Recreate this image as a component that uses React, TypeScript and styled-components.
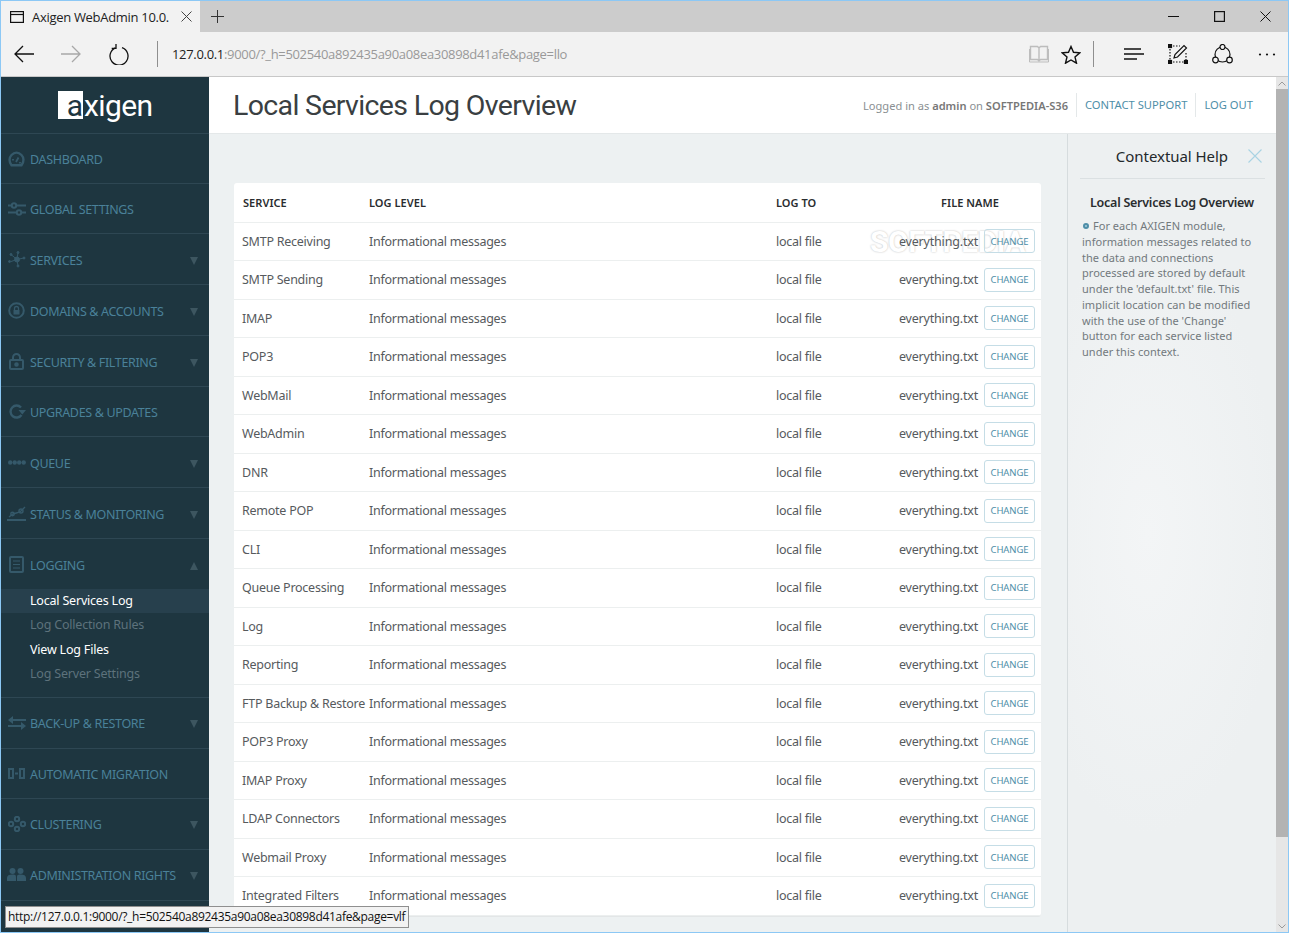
import React from 'react';
import styled, { createGlobalStyle } from 'styled-components';

const GlobalStyle = createGlobalStyle`
  html, body {
    margin: 0;
    padding: 0;
    overflow: hidden;
    background: #fff;
  }
`;

const sans = `"Noto Sans", "Open Sans", sans-serif`;

const Window = styled.div`
  position: relative;
  width: 1289px;
  height: 933px;
  box-sizing: border-box;
  border: 1px solid #8cc8f5;
  display: flex;
  flex-direction: column;
  overflow: hidden;
  font-family: ${sans};
`;

const TabBar = styled.div`
  height: 31px;
  flex: none;
  background: #cccccc;
  display: flex;
  align-items: stretch;
`;

const Tab = styled.div`
  width: 199px;
  background: #f2f2f2;
  display: flex;
  align-items: center;
  padding: 0 8px 0 9px;
  box-sizing: border-box;
  gap: 8px;
  flex: none;
`;

const TabTitle = styled.span`
  font: 13px "Open Sans", sans-serif;
  letter-spacing: -0.3px;
  color: #222;
  white-space: nowrap;
  flex: 1;
`;

const NewTab = styled.div`
  width: 34px;
  display: flex;
  align-items: center;
  justify-content: center;
  flex: none;
`;

const TabSpacer = styled.div`
  flex: 1;
`;

const WinButton = styled.div`
  width: 46px;
  display: flex;
  align-items: center;
  justify-content: center;
`;

const Toolbar = styled.div`
  height: 45px;
  flex: none;
  box-sizing: border-box;
  background: #f2f2f2;
  border-bottom: 1px solid #c8c8c8;
  display: flex;
  align-items: center;
`;

const ToolButton = styled.div<{ $w: number }>`
  width: ${(p) => p.$w}px;
  height: 44px;
  flex: none;
  display: flex;
  align-items: center;
  justify-content: center;
`;

const ToolDivider = styled.div<{ $m: string }>`
  width: 1px;
  height: 26px;
  background: #8f8f8f;
  flex: none;
  margin: ${(p) => p.$m};
`;

const Url = styled.div`
  flex: 1;
  font: 13px "Open Sans", sans-serif;
  letter-spacing: -0.32px;
  color: #999;
  white-space: nowrap;
  b {
    font-weight: 400;
    color: #222;
  }
`;

const Body = styled.div`
  flex: 1;
  display: flex;
  min-height: 0;
`;

const Sidebar = styled.nav`
  width: 208px;
  flex: none;
  background: #1e3640;
  overflow: hidden;
`;

const Logo = styled.div`
  height: 56px;
  border-bottom: 1px solid #2e4753;
  display: flex;
  align-items: center;
  padding-left: 57px;
`;

const LogoBox = styled.span`
  width: 25px;
  height: 28px;
  background: #fff;
  color: #1e3640;
  font: 400 30px/29.5px Roboto, sans-serif;
  text-align: right;
  display: block;
`;

const LogoText = styled.span`
  height: 28px;
  font: 400 30px/29.5px Roboto, sans-serif;
  color: #fff;
  letter-spacing: -0.6px;
  margin-left: 1px;
`;

const NavItem = styled.div<{ $h: number; $open?: boolean }>`
  height: ${(p) => p.$h}px;
  box-sizing: border-box;
  border-bottom: ${(p) => (p.$open ? 'none' : '1px solid #2e4753')};
  display: flex;
  align-items: center;
`;

const NavIcon = styled.div`
  width: 29px;
  flex: none;
  display: flex;
  justify-content: center;
  padding-left: 2px;
  box-sizing: border-box;
  color: #35596a;
`;

const NavLabel = styled.span`
  font: 12.5px ${sans};
  letter-spacing: -0.34px;
  color: #4a8199;
  white-space: nowrap;
  flex: 1;
  padding-top: 2px;
`;

const Arrow = styled.span<{ $up?: boolean }>`
  width: 0;
  height: 0;
  margin: 3px 11px 0 0;
  border-left: 4.5px solid transparent;
  border-right: 4.5px solid transparent;
  ${(p) => (p.$up ? 'border-bottom: 8px solid #3d5660;' : 'border-top: 8px solid #3d5660;')}
`;

const SubList = styled.div`
  border-bottom: 1px solid #2e4753;
  padding-bottom: 10.4px;
`;

const SubItem = styled.div<{ $tone: 'active' | 'white' | 'dim' }>`
  height: 24.4px;
  padding-left: 29px;
  font: 12.5px/24px ${sans};
  letter-spacing: -0.2px;
  white-space: nowrap;
  color: ${(p) => (p.$tone === 'dim' ? '#5d727c' : '#fff')};
  background: ${(p) => (p.$tone === 'active' ? '#27404d' : 'transparent')};
`;

const Main = styled.main`
  flex: 1;
  min-width: 0;
  display: flex;
  flex-direction: column;
  background: #edf1f2;
`;

const Header = styled.header`
  height: 57px;
  flex: none;
  box-sizing: border-box;
  background: #fff;
  border-bottom: 1px solid #e4e8e9;
  display: flex;
  align-items: center;
  padding: 0 23px 0 24px;
`;

const Title = styled.h1`
  flex: 1;
  margin: 0;
  font: 400 28.5px Roboto, sans-serif;
  letter-spacing: -0.65px;
  color: #3a3f42;
  white-space: nowrap;
`;

const UserInfo = styled.span`
  font: 11.1px ${sans};
  color: #8a8f92;
  white-space: nowrap;
  b {
    font-weight: 600;
    color: #777;
  }
`;

const HeaderLink = styled.a`
  font: 11.2px ${sans};
  letter-spacing: 0;
  color: #4e8ea8;
  border-left: 1px solid #e4e8e9;
  margin-left: 8px;
  padding-left: 8px;
  height: 24px;
  line-height: 24px;
  white-space: nowrap;
`;

const Columns = styled.div`
  flex: 1;
  min-height: 0;
  display: flex;
`;

const Content = styled.section`
  width: 858px;
  flex: none;
  box-sizing: border-box;
  padding: 49px 0 0 25px;
  overflow: hidden;
`;

const Card = styled.div`
  width: 807px;
  background: #fff;
  border-radius: 3px;
  position: relative;
  box-shadow: 0 1px 0 #e3e6e7;
`;

const Row = styled.div<{ $head?: boolean }>`
  display: grid;
  grid-template-columns: 127px 407px 115px 1fr;
  align-items: center;
  height: ${(p) => (p.$head ? '39.7px' : '38.5px')};
  box-sizing: border-box;
  padding-left: 8px;
  border-bottom: 1px solid #ecefef;
  &:last-of-type {
    border-bottom: none;
  }
`;

const HeadCell = styled.div<{ $inset?: boolean }>`
  font: 600 11px ${sans};
  letter-spacing: 0.05px;
  color: #2a2d2f;
  padding-left: ${(p) => (p.$inset ? '1px' : '0')};
`;

const HeadFile = styled(HeadCell)`
  text-align: right;
  padding-right: 42px;
`;

const Cell = styled.div`
  font: 12.5px ${sans};
  letter-spacing: -0.25px;
  color: #565a5d;
  white-space: nowrap;
`;

const FileCell = styled(Cell)`
  display: flex;
  justify-content: flex-end;
  align-items: center;
  gap: 6px;
  padding-right: 6px;
  position: relative;
  z-index: 1;
  letter-spacing: -0.18px;
`;

const ChangeButton = styled.button`
  width: 51px;
  height: 24px;
  flex: none;
  box-sizing: border-box;
  background: transparent;
  border: 1px solid #c5dde6;
  border-radius: 3px;
  padding: 0;
  font: 9.5px ${sans};
  letter-spacing: -0.1px;
  color: #4e8ea8;
`;

const Watermark = styled.div`
  position: absolute;
  left: 636px;
  top: 41px;
  font: 700 30px Roboto, sans-serif;
  letter-spacing: -0.5px;
  color: #fff;
  text-shadow: 0 0 2px rgba(0, 0, 0, 0.28);
  pointer-events: none;
  white-space: nowrap;
`;

const Help = styled.aside`
  flex: 1;
  min-width: 0;
  box-sizing: border-box;
  border-left: 1px solid #d6dcde;
  padding: 0 11px 0 12px;
  background: radial-gradient(ellipse 130px 300px at 80px 400px, #f3f5f6, #edf0f1);
`;

const HelpHead = styled.div`
  height: 44px;
  border-bottom: 1px solid #dbe0e2;
  display: flex;
  align-items: center;
  justify-content: flex-end;
  gap: 20px;
  padding-right: 3px;
`;

const HelpTitle = styled.span`
  font: 15px ${sans};
  letter-spacing: -0.05px;
  color: #23282b;
`;

const HelpHeading = styled.h3`
  margin: 14px 0 0;
  padding-left: 10px;
  font: 600 12.5px/19px ${sans};
  letter-spacing: -0.25px;
  color: #2a2d2f;
  white-space: nowrap;
`;

const HelpBody = styled.p`
  margin: 6px 0 0;
  padding-left: 2px;
  font: 11px/15.75px ${sans};
  letter-spacing: 0.02px;
  color: #72797d;
  white-space: nowrap;
`;

const Bullet = styled.span`
  display: inline-block;
  width: 2px;
  height: 2px;
  border: 2px solid #4e8ea8;
  background: #a9cdda;
  border-radius: 50%;
  margin: 0 4px 1px 1px;
`;

const Scrollbar = styled.div`
  width: 12px;
  flex: none;
  background: #e6e6e6;
  display: flex;
  flex-direction: column;
  align-items: center;
`;

const ScrollCap = styled.div`
  height: 12px;
  flex: none;
  display: flex;
  align-items: center;
  justify-content: center;
`;

const ScrollThumb = styled.div`
  width: 100%;
  height: 748px;
  background: #b3b3b3;
  flex: none;
`;

const ScrollRest = styled.div`
  flex: 1;
`;

const StatusTip = styled.div`
  position: absolute;
  left: 4px;
  bottom: 4px;
  height: 22px;
  box-sizing: border-box;
  border: 1px solid #8f8f8f;
  background: #f2f2f2;
  padding: 0 3px 0 2px;
  font: 12px/20px "Open Sans", sans-serif;
  letter-spacing: -0.3px;
  color: #111;
  white-space: nowrap;
`;

const Icon = ({ w, h, sw = 1.2, stroke = '#111', children }: { w: number; h: number; sw?: number; stroke?: string; children: React.ReactNode }) => (
  <svg width={w} height={h} viewBox={`0 0 ${w} ${h}`} fill="none" stroke={stroke} strokeWidth={sw} style={{ flex: 'none' }}>
    {children}
  </svg>
);

const navIcons: Record<string, React.ReactNode> = {
  dashboard: (
    <svg width="17" height="16" viewBox="0 0 17 16" fill="none" stroke="currentColor" strokeWidth="2.4">
      <path d="M3.500 14.300C0.800 11 1 6.500 3.500 4C6.500 1 10.500 1 13.500 4C16 6.500 16.200 11 13.500 14.300Z" />
      <path d="M8 11L10.500 6.500M5 8v1.500M12 11v1.500" strokeWidth="1.800" />
    </svg>
  ),
  settings: (
    <svg width="18" height="14" viewBox="0 0 18 14" fill="none" stroke="currentColor" strokeWidth="2">
      <path d="M0 3.500h18M0 10.500h18" />
      <circle cx="6" cy="3.500" r="2.200" fill="#1e3640" />
      <circle cx="11" cy="10.500" r="2.200" fill="#1e3640" />
    </svg>
  ),
  services: (
    <svg width="18" height="17" viewBox="0 0 18 17" fill="currentColor" stroke="currentColor" strokeWidth="1">
      <path d="M9 8.500L3 3.500M9 8.500L10 1.500M9 8.500L16 7M9 8.500L3 10.500M9 8.500L10 15" />
      <circle cx="9" cy="8.500" r="2.500" />
      <circle cx="3" cy="3.500" r="1" />
      <circle cx="10" cy="1.500" r="1" />
      <circle cx="16" cy="7" r="1" />
      <circle cx="1.500" cy="10.500" r="1" />
      <circle cx="10" cy="15" r="1" />
    </svg>
  ),
  domains: (
    <svg width="17" height="17" viewBox="0 0 17 17" fill="none" stroke="currentColor" strokeWidth="2">
      <circle cx="8.500" cy="8.500" r="7.300" />
      <rect x="5.500" y="8" width="6" height="4.500" fill="currentColor" stroke="none" />
      <path d="M6.500 8V6.500a2 2 0 0 1 4 0V8" strokeWidth="1.300" />
    </svg>
  ),
  security: (
    <svg width="15" height="17" viewBox="0 0 15 17" fill="none" stroke="currentColor" strokeWidth="2">
      <rect x="1" y="7" width="13" height="9" rx="1" />
      <path d="M4 7V4.500a3.500 3.500 0 0 1 7 0V7" />
      <circle cx="7.500" cy="11.500" r="1.300" fill="currentColor" />
    </svg>
  ),
  upgrades: (
    <svg width="18" height="15" viewBox="0 0 18 15" fill="none" stroke="currentColor" strokeWidth="2.400">
      <path d="M13 3.500A6 6 0 1 0 13.500 11" />
      <path d="M10.500 6h7.500l-3.700 4.500z" fill="currentColor" stroke="none" />
    </svg>
  ),
  queue: (
    <svg width="18" height="5" viewBox="0 0 18 5" fill="currentColor">
      <circle cx="2.200" cy="2.500" r="2.200" />
      <circle cx="6.700" cy="2.500" r="2.200" />
      <circle cx="11.200" cy="2.500" r="2.200" />
      <circle cx="15.700" cy="2.500" r="2.200" />
    </svg>
  ),
  status: (
    <svg width="19" height="16" viewBox="0 0 19 16" fill="none" stroke="currentColor" strokeWidth="1.400">
      <path d="M0 15h19" strokeWidth="2" />
      <path d="M2 12l4-3 7-2 5-5" />
      <circle cx="5.500" cy="9" r="1.700" />
      <circle cx="14" cy="6" r="2" />
    </svg>
  ),
  logging: (
    <svg width="15" height="17" viewBox="0 0 15 17" fill="none" stroke="currentColor" strokeWidth="2">
      <rect x="1" y="1" width="13" height="15" rx="1" />
      <path d="M4 5h7M4 8.500h7M4 12h7" strokeWidth="1" />
    </svg>
  ),
  backup: (
    <svg width="18" height="14" viewBox="0 0 18 14" fill="currentColor">
      <path d="M5 0v3h13v2H5v3L0 4zM13 6v3H0v2h13v3l5-4z" />
    </svg>
  ),
  migration: (
    <svg width="17" height="11" viewBox="0 0 17 11" fill="none" stroke="currentColor" strokeWidth="2">
      <rect x="1" y="1" width="4" height="9" />
      <rect x="12" y="1" width="4" height="9" />
      <path d="M7 5.500h3" />
    </svg>
  ),
  clustering: (
    <svg width="18" height="16" viewBox="0 0 18 16" fill="none" stroke="currentColor" strokeWidth="2">
      <circle cx="9" cy="3" r="2.200" />
      <circle cx="3" cy="8" r="2.200" />
      <circle cx="15" cy="8" r="2.200" />
      <circle cx="9" cy="13" r="2.200" />
    </svg>
  ),
  admin: (
    <svg width="19" height="13" viewBox="0 0 19 13" fill="currentColor">
      <circle cx="5.500" cy="3" r="3" />
      <circle cx="13.500" cy="3" r="3" />
      <path d="M0 13v-3c0-2.500 2-3.500 5.500-3.500S9 7.500 9 10v3zM10 13v-3c0-2.500 0-3.500 3.500-3.500S19 7.500 19 10v3z" />
    </svg>
  ),
};

type Nav = { key: string; label: string; h: number; arrow?: boolean };

const navBefore: Nav[] = [
  { key: 'dashboard', label: 'DASHBOARD', h: 50 },
  { key: 'settings', label: 'GLOBAL SETTINGS', h: 50 },
  { key: 'services', label: 'SERVICES', h: 51, arrow: true },
  { key: 'domains', label: 'DOMAINS & ACCOUNTS', h: 51, arrow: true },
  { key: 'security', label: 'SECURITY & FILTERING', h: 51, arrow: true },
  { key: 'upgrades', label: 'UPGRADES & UPDATES', h: 50 },
  { key: 'queue', label: 'QUEUE', h: 51, arrow: true },
  { key: 'status', label: 'STATUS & MONITORING', h: 51, arrow: true },
];

const navAfter: Nav[] = [
  { key: 'backup', label: 'BACK-UP & RESTORE', h: 51, arrow: true },
  { key: 'migration', label: 'AUTOMATIC MIGRATION', h: 50 },
  { key: 'clustering', label: 'CLUSTERING', h: 51, arrow: true },
  { key: 'admin', label: 'ADMINISTRATION RIGHTS', h: 51, arrow: true },
];

const services = [
  'SMTP Receiving',
  'SMTP Sending',
  'IMAP',
  'POP3',
  'WebMail',
  'WebAdmin',
  'DNR',
  'Remote POP',
  'CLI',
  'Queue Processing',
  'Log',
  'Reporting',
  'FTP Backup & Restore',
  'POP3 Proxy',
  'IMAP Proxy',
  'LDAP Connectors',
  'Webmail Proxy',
  'Integrated Filters',
];

const NavRow = ({ item }: { item: Nav }) => (
  <NavItem $h={item.h}>
    <NavIcon>{navIcons[item.key]}</NavIcon>
    <NavLabel>{item.label}</NavLabel>
    {item.arrow && <Arrow />}
  </NavItem>
);

export default function App() {
  return (
    <Window>
      <GlobalStyle />
      <TabBar>
        <Tab>
          <Icon w={14} h={12}>
            <rect x="0.600" y="0.600" width="12.800" height="10.800" />
            <path d="M0.600 3.500h12.800" />
          </Icon>
          <TabTitle>Axigen WebAdmin 10.0.</TabTitle>
          <Icon w={11} h={11} sw={1} stroke="#444">
            <path d="M0.500 0.500l10 10M10.500 0.500l-10 10" />
          </Icon>
        </Tab>
        <NewTab>
          <Icon w={13} h={13} sw={1} stroke="#333">
            <path d="M6.500 0v13M0 6.500h13" />
          </Icon>
        </NewTab>
        <TabSpacer />
        <WinButton>
          <Icon w={11} h={11} sw={1}>
            <path d="M0 5.500h11" />
          </Icon>
        </WinButton>
        <WinButton>
          <Icon w={11} h={11} sw={1.200}>
            <rect x="0.600" y="0.600" width="9.800" height="9.800" />
          </Icon>
        </WinButton>
        <WinButton>
          <Icon w={11} h={11} sw={1}>
            <path d="M0.500 0.500l10 10M10.500 0.500l-10 10" />
          </Icon>
        </WinButton>
      </TabBar>
      <Toolbar>
        <ToolButton $w={46}>
          <Icon w={20} h={18} sw={1.300}>
            <path d="M20 9H1M9 1L1 9l8 8" />
          </Icon>
        </ToolButton>
        <ToolButton $w={48}>
          <Icon w={20} h={18} sw={1.300} stroke="#a8a8a8">
            <path d="M0 9h19M11 1l8 8-8 8" />
          </Icon>
        </ToolButton>
        <ToolButton $w={48}>
          <Icon w={20} h={21} sw={1.300}>
            <path d="M6.500 3.800A9 9 0 1 0 13 3.600" />
            <path d="M7 0v4.300H2.700" />
          </Icon>
        </ToolButton>
        <ToolDivider $m="0 14px 0 14px" />
        <Url>
          <b>127.0.0.1</b>:9000/?_h=502540a892435a90a08ea30898d41afe&amp;page=llo
        </Url>
        <ToolButton $w={33}>
          <Icon w={20} h={18} stroke="#bdbdbd" sw={1.400}>
            <path d="M1.500 1.500h7L10 3l1.500-1.500h7v13h-7L10 16l-1.500-1.500h-7zM10 3v13" />
            <path d="M0.500 4v13h19V4" strokeWidth="1" />
          </Icon>
        </ToolButton>
        <ToolButton $w={31}>
          <Icon w={20} h={19} sw={1.400}>
            <path d="M10 1.500l2.500 5.800 6.300.6-4.800 4.100 1.500 6.200L10 15l-5.500 3.200L6 12 1.200 7.900l6.300-.6z" />
          </Icon>
        </ToolButton>
        <ToolDivider $m="0 17px 0 7px" />
        <ToolButton $w={45}>
          <Icon w={20} h={15} sw={1.300}>
            <path d="M0 2h17M0 7h20M0 12h13" />
          </Icon>
        </ToolButton>
        <ToolButton $w={43}>
          <Icon w={20} h={20} sw={1.200}>
            <path d="M2 2h10M2 18h16M2 2v16M18 9v9" strokeDasharray="1.500 1.500" />
            <path d="M6 14l1-3.500 9-9 2.500 2.500-9 9z" />
            <rect x="0.500" y="0.500" width="3" height="3" fill="#111" />
            <rect x="0.500" y="16.500" width="3" height="3" fill="#111" />
            <rect x="16.500" y="16.500" width="3" height="3" fill="#111" />
          </Icon>
        </ToolButton>
        <ToolButton $w={46}>
          <Icon w={21} h={20} sw={1.200}>
            <circle cx="10.500" cy="10.500" r="7.500" />
            <circle cx="10.500" cy="3" r="2.500" fill="#f2f2f2" />
            <circle cx="3.500" cy="16" r="2.800" fill="#f2f2f2" />
            <circle cx="17.500" cy="16" r="2.800" fill="#f2f2f2" />
          </Icon>
        </ToolButton>
        <ToolButton $w={43}>
          <svg width="18" height="3" viewBox="0 0 18 3" fill="#111">
            <circle cx="2" cy="1.500" r="1.100" />
            <circle cx="9" cy="1.500" r="1.100" />
            <circle cx="16" cy="1.500" r="1.100" />
          </svg>
        </ToolButton>
      </Toolbar>
      <Body>
        <Sidebar>
          <Logo>
            <LogoBox>a</LogoBox>
            <LogoText>xigen</LogoText>
          </Logo>
          {navBefore.map((item) => (
            <NavRow key={item.key} item={item} />
          ))}
          <NavItem $h={50} $open>
            <NavIcon>{navIcons.logging}</NavIcon>
            <NavLabel>LOGGING</NavLabel>
            <Arrow $up />
          </NavItem>
          <SubList>
            <SubItem $tone="active">Local Services Log</SubItem>
            <SubItem $tone="dim">Log Collection Rules</SubItem>
            <SubItem $tone="white">View Log Files</SubItem>
            <SubItem $tone="dim">Log Server Settings</SubItem>
          </SubList>
          {navAfter.map((item) => (
            <NavRow key={item.key} item={item} />
          ))}
        </Sidebar>
        <Main>
          <Header>
            <Title>Local Services Log Overview</Title>
            <UserInfo>
              Logged in as <b>admin</b> on <b>SOFTPEDIA-S36</b>
            </UserInfo>
            <HeaderLink>CONTACT SUPPORT</HeaderLink>
            <HeaderLink>LOG OUT</HeaderLink>
          </Header>
          <Columns>
            <Content>
              <Card>
                <Row $head>
                  <HeadCell $inset>SERVICE</HeadCell>
                  <HeadCell>LOG LEVEL</HeadCell>
                  <HeadCell>LOG TO</HeadCell>
                  <HeadFile>FILE NAME</HeadFile>
                </Row>
                {services.map((name) => (
                  <Row key={name}>
                    <Cell>{name}</Cell>
                    <Cell>Informational messages</Cell>
                    <Cell>local file</Cell>
                    <FileCell>
                      everything.txt
                      <ChangeButton>CHANGE</ChangeButton>
                    </FileCell>
                  </Row>
                ))}
                <Watermark>SOFTPEDIA</Watermark>
              </Card>
            </Content>
            <Help>
              <HelpHead>
                <HelpTitle>Contextual Help</HelpTitle>
                <Icon w={14} h={14} sw={1.100} stroke="#a9d3e3">
                  <path d="M0.500 0.500l13 13M13.500 0.500l-13 13" />
                </Icon>
              </HelpHead>
              <HelpHeading>Local Services Log Overview</HelpHeading>
              <HelpBody>
                <Bullet />
                For each AXIGEN module,
                <br />
                information messages related to
                <br />
                the data and connections
                <br />
                processed are stored by default
                <br />
                under the 'default.txt' file. This
                <br />
                implicit location can be modified
                <br />
                with the use of the 'Change'
                <br />
                button for each service listed
                <br />
                under this context.
              </HelpBody>
            </Help>
          </Columns>
        </Main>
        <Scrollbar>
          <ScrollCap>
            <Icon w={8} h={5} sw={1} stroke="#9a9a9a">
              <path d="M0.500 4.500L4 1l3.500 3.500" />
            </Icon>
          </ScrollCap>
          <ScrollThumb />
          <ScrollRest />
          <ScrollCap>
            <Icon w={8} h={5} sw={1} stroke="#9a9a9a">
              <path d="M0.500 0.500L4 4l3.500-3.500" />
            </Icon>
          </ScrollCap>
        </Scrollbar>
      </Body>
      <StatusTip>http://127.0.0.1:9000/?_h=502540a892435a90a08ea30898d41afe&amp;page=vlf</StatusTip>
    </Window>
  );
}
